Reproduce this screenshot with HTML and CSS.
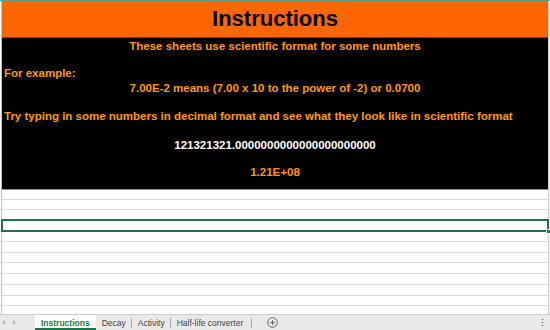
FILE: index.html
```html
<!DOCTYPE html>
<html>
<head>
  <title>Instructions</title>
  <link rel="stylesheet" href="styles.css">
</head>
<body>

  <div class="window">

    <!-- Worksheet area -->
    <div class="sheet">
      <div class="edge-left"></div>

      <div class="cells">
        <div class="title-row">Instructions</div>

        <div class="notes">
          <p class="line center first">These sheets use scientific format for some numbers</p>
          <p class="line left gap-a">For example:</p>
          <p class="line center gap-b">7.00E-2 means (7.00 x 10 to the power of -2) or 0.0700</p>
          <p class="line left gap-c">Try typing in some numbers in decimal format and see what they look like in scientific format</p>
          <p class="line center white gap-d">121321321.0000000000000000000000</p>
          <p class="line center gap-e">1.21E+08</p>
        </div>

        <div class="grid">
          <div class="row r10"></div>
          <div class="row r10"></div>
          <div class="row r11"></div>
          <div class="row r11 selected"></div>
          <div class="row r10"></div>
          <div class="row r11"></div>
          <div class="row r10"></div>
          <div class="row r11"></div>
          <div class="row r11"></div>
          <div class="row r11"></div>
          <div class="row r10"></div>
          <div class="row r7"></div>
        </div>
      </div>

      <div class="edge-right"></div>
    </div>

    <!-- Sheet tabs -->
    <div class="tabbar">
      <div class="nav">
        <svg width="4" height="5" viewBox="0 0 4 5"><path d="M3 0 L0 2.5 L3 5 Z" fill="#b8b8b8"/></svg>
        <svg width="4" height="5" viewBox="0 0 4 5"><path d="M1 0 L4 2.5 L1 5 Z" fill="#b8b8b8"/></svg>
      </div>
      <div class="tab active">Instructions</div>
      <div class="tab">Decay</div>
      <div class="tab">Activity</div>
      <div class="tab last">Half-life converter</div>
      <div class="add">
        <svg width="11" height="11" viewBox="0 0 11 11">
          <circle cx="5.5" cy="5.5" r="4.8" fill="none" stroke="#666" stroke-width="1"/>
          <path d="M5.5 3 V8 M3 5.5 H8" stroke="#666" stroke-width="1"/>
        </svg>
      </div>
      <div class="more">
        <svg width="3" height="9" viewBox="0 0 3 9">
          <circle cx="1.5" cy="1.5" r="0.8" fill="#777"/>
          <circle cx="1.5" cy="4.5" r="0.8" fill="#777"/>
          <circle cx="1.5" cy="7.5" r="0.8" fill="#777"/>
        </svg>
      </div>
    </div>

  </div>

</body>
</html>
```

FILE: styles.css
```css
body {
  margin: 0;
  background-color: #ffffff;
  font-family: "Liberation Sans", Arial, sans-serif;
}

.window {
  width: 550px;
  height: 330px;
  overflow: hidden;
  display: flex;
  flex-direction: column;
}

.sheet {
  height: 313px;
  display: flex;
  border-top: 1px solid #5a9e8f;
}

.edge-left {
  width: 1px;
  background-color: #ffffff;
  border-right: 1px solid #c4c4c4;
}

.edge-right {
  width: 1px;
  background-color: #f2f2f2;
  border-left: 1px solid #d0d0d0;
}

.cells {
  flex: 1;
  display: flex;
  flex-direction: column;
}

.title-row {
  height: 36px;
  line-height: 36px;
  background-color: #ff6600;
  border-bottom: 1px solid #8a3c00;
  color: #000000;
  font-size: 22px;
  font-weight: bold;
  text-align: center;
}

.notes {
  height: 152px;
  box-sizing: border-box;
  background-color: #000000;
  border-bottom: 1px solid #8c8c8c;
  overflow: hidden;
}

.line {
  margin: 0;
  height: 14px;
  line-height: 14px;
  font-size: 11.5px;
  font-weight: bold;
  color: #ff9900;
  white-space: nowrap;
}

.center {
  text-align: center;
}

.left {
  padding-left: 2px;
}

.white {
  color: #ffffff;
}

.first {
  margin-top: 1px;
}

.gap-a {
  margin-top: 13px;
}

.gap-b {
  margin-top: 1px;
}

.gap-c {
  margin-top: 14px;
}

.gap-d {
  margin-top: 15px;
}

.gap-e {
  margin-top: 13px;
}

.grid {
  flex: 1;
}

.row {
  box-sizing: border-box;
  border-bottom: 1px solid #dadada;
  position: relative;
}

.r10 {
  height: 10px;
}

.r11 {
  height: 11px;
}

.r7 {
  height: 7px;
  border-bottom: none;
}

.row.selected::before {
  content: "";
  position: absolute;
  left: -1px;
  right: -1px;
  top: -2px;
  bottom: -1px;
  border: 2px solid #217346;
}

.row.selected::after {
  content: "";
  position: absolute;
  right: -3px;
  bottom: -3px;
  width: 3px;
  height: 3px;
  background-color: #217346;
  border: 1px solid #ffffff;
}

.tabbar {
  height: 15px;
  display: flex;
  align-items: stretch;
  background-color: #e9e9e9;
  border-top: 1px solid #cdcdcd;
  font-size: 8.5px;
  color: #444444;
}

.nav {
  width: 35px;
  display: flex;
  align-items: center;
  gap: 6px;
  padding-left: 2px;
  box-sizing: border-box;
}

.tab {
  display: flex;
  align-items: center;
  padding: 0 6px;
  position: relative;
}

.tab::after {
  content: "";
  position: absolute;
  right: 0;
  top: 3px;
  height: 10px;
  border-right: 1px solid #a8a8a8;
}

.tab.active {
  background-color: #ffffff;
  color: #217346;
  font-weight: bold;
  box-shadow: inset 0 -2px 0 #217346;
}

.tab.active::after {
  display: none;
}

.tab.last {
  padding-right: 9px;
}

.add {
  display: flex;
  align-items: center;
  margin-left: 15px;
}

.more {
  display: flex;
  align-items: center;
  margin-left: auto;
  margin-right: 6px;
}
```
